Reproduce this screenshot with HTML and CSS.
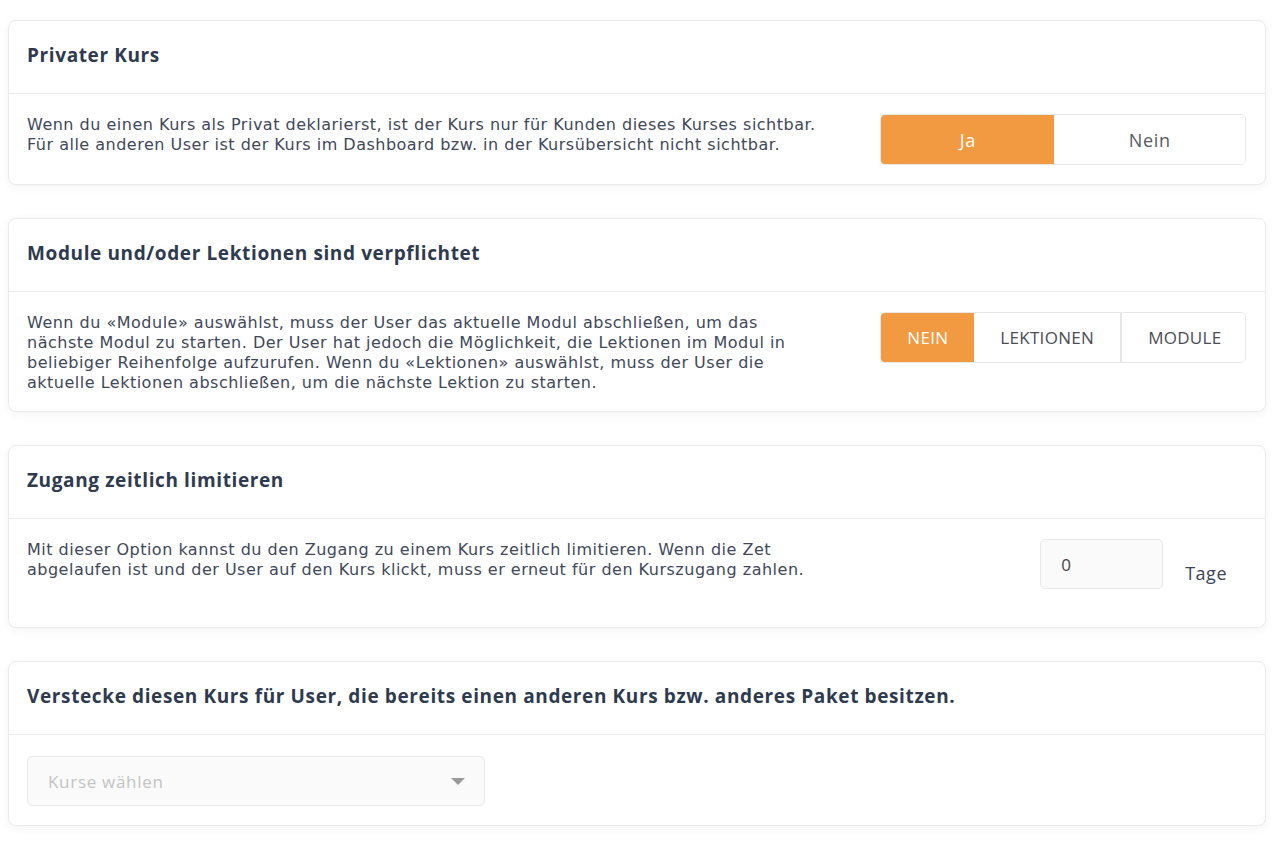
FILE: index.html
```html
<!DOCTYPE html>
<html lang="de">
<head>
<meta charset="utf-8">
<title>Kurs Einstellungen</title>
<link rel="stylesheet" href="styles.css">
</head>
<body>
<div class="page">
  <section class="card">
    <header class="card-head"><h2>Privater Kurs</h2></header>
    <div class="card-body row">
      <p class="desc">Wenn du einen Kurs als Privat deklarierst, ist der Kurs nur für Kunden dieses Kurses sichtbar.<br>Für alle anderen User ist der Kurs im Dashboard bzw. in der Kursübersicht nicht sichtbar.</p>
      <div class="ctrl">
        <div class="toggle toggle-yn">
          <button class="opt opt-ja active">Ja</button>
          <button class="opt opt-nein">Nein</button>
        </div>
      </div>
    </div>
  </section>

  <section class="card">
    <header class="card-head"><h2>Module und/oder Lektionen sind verpflichtet</h2></header>
    <div class="card-body row tight">
      <p class="desc">Wenn du «Module» auswählst, muss der User das aktuelle Modul abschließen, um das<br>nächste Modul zu starten. Der User hat jedoch die Möglichkeit, die Lektionen im Modul in<br>beliebiger Reihenfolge aufzurufen. Wenn du «Lektionen» auswählst, muss der User die<br>aktuelle Lektionen abschließen, um die nächste Lektion zu starten.</p>
      <div class="ctrl">
        <div class="toggle toggle-caps">
          <button class="opt active">NEIN</button>
          <button class="opt">LEKTIONEN</button>
          <button class="opt sep">MODULE</button>
        </div>
      </div>
    </div>
  </section>

  <section class="card">
    <header class="card-head"><h2>Zugang zeitlich limitieren</h2></header>
    <div class="card-body row">
      <p class="desc">Mit dieser Option kannst du den Zugang zu einem Kurs zeitlich limitieren. Wenn die Zet<br>abgelaufen ist und der User auf den Kurs klickt, muss er erneut für den Kurszugang zahlen.</p>
      <div class="ctrl ctrl-days">
        <div class="num-input">0</div>
        <span class="unit">Tage</span>
      </div>
    </div>
  </section>

  <section class="card">
    <header class="card-head"><h2>Verstecke diesen Kurs für User, die bereits einen anderen Kurs bzw. anderes Paket besitzen.</h2></header>
    <div class="card-body">
      <div class="select">
        <span class="placeholder">Kurse wählen</span>
        <span class="caret"></span>
      </div>
    </div>
  </section>
</div>
</body>
</html>
```
FILE: styles.css
```css
* { box-sizing: border-box; }
body {
  margin: 0;
  background: #ffffff;
  font-family: "Open Sans", "Noto Sans", sans-serif;
  color: #3d4354;
}
.page {
  padding: 20px 17px 20px 8px;
  display: flex;
  flex-direction: column;
  gap: 33px;
}
.card {
  background: #fff;
  border: 1px solid #ebebeb;
  border-radius: 8px;
  box-shadow: 0 2px 10px rgba(0, 0, 0, 0.05);
}
.card-head {
  height: 73px;
  border-bottom: 1px solid #ececec;
  display: flex;
  align-items: center;
  padding: 0 19px 4px 18px;
}
.card-head h2 {
  margin: 0;
  font-size: 19px;
  font-weight: 700;
  color: #2e3a4e;
  letter-spacing: 0.62px;
}
.card-body {
  padding: 21px 19px 19px 18px;
}
.card-body.tight { padding-bottom: 18px; }
.row {
  display: grid;
  grid-template-columns: 1fr 30%;
  align-items: start;
}
.row .ctrl { margin-top: -1px; }
.desc {
  margin: 0;
  font-family: "DejaVu Sans", "Open Sans", sans-serif;
  font-size: 16px;
  line-height: 20px;
  color: #41475a;
  letter-spacing: 0.5px;
  white-space: nowrap;
}
.ctrl {
  display: flex;
}
.toggle {
  display: flex;
  width: 100%;
  height: 51px;
  border: 1px solid #e7e7e7;
  border-radius: 5px;
  overflow: hidden;
}
.opt {
  border: 0;
  margin: 0;
  background: #fff;
  font-family: inherit;
  color: #555a63;
  height: 100%;
  cursor: pointer;
}
.opt.active {
  background: #f29a41;
  color: #fff;
}
.toggle-yn .opt { font-size: 18px; letter-spacing: 0.7px; }
.opt-ja { width: 173px; }
.opt-nein { flex: 1; }
.toggle-caps .opt {
  font-family: "Open Sans", sans-serif;
  font-size: 17px;
  padding: 0 26px;
  color: #4a4d55;
  letter-spacing: 0.3px;
}
.toggle-caps .opt.active { color: #fff; }
.toggle-caps .opt.sep {
  flex: 1;
  border-left: 2px solid #e6e6e6;
}
.ctrl-days {
  justify-content: flex-end;
  align-items: flex-start;
  padding-right: 19px;
}
.num-input {
  width: 123px;
  height: 50px;
  margin-bottom: 19px;
  margin-right: 2px;
  background: #fafafa;
  border: 1px solid #e8e8e8;
  border-radius: 5px;
  padding: 0 20px;
  display: flex;
  align-items: center;
  font-size: 17px;
  color: #444;
}
.unit {
  margin-left: 20px;
  margin-top: 24px;
  font-size: 18px;
  line-height: 20px;
  letter-spacing: 0.5px;
  color: #3d4354;
}
.select {
  width: 458px;
  height: 50px;
  background: #fafafa;
  border: 1px solid #e8e8e8;
  border-radius: 5px;
  display: flex;
  align-items: center;
  justify-content: space-between;
  padding: 0 19px 0 20px;
}
.placeholder {
  font-size: 17px;
  letter-spacing: 0.7px;
  color: #c3c3c3;
}
.caret {
  width: 0;
  height: 0;
  border-left: 7px solid transparent;
  border-right: 7px solid transparent;
  border-top: 7px solid #9a9a9a;
}
```
